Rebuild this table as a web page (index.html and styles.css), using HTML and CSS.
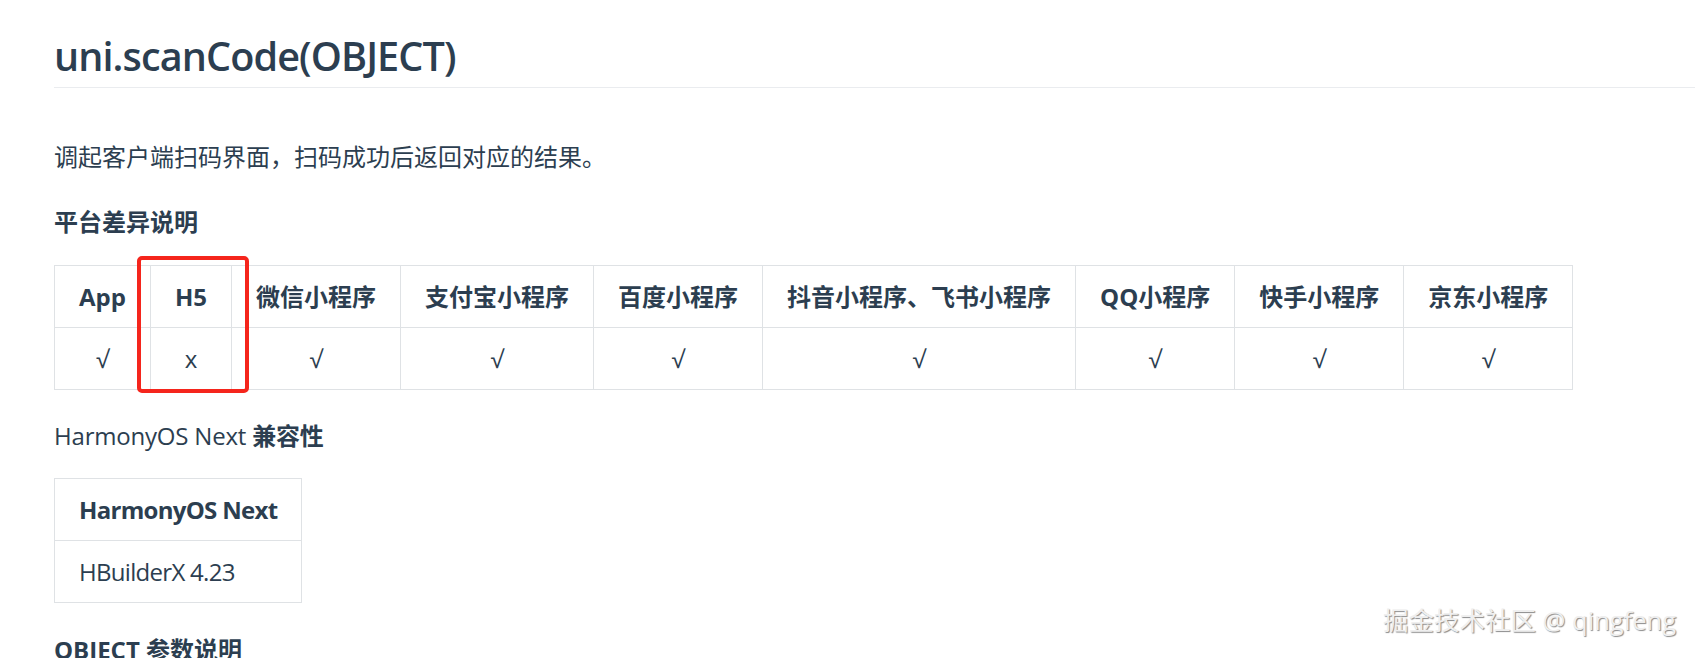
FILE: index.html
```html
<!DOCTYPE html>
<html lang="zh-CN">
<head>
  <meta charset="UTF-8" />
  <meta name="viewport" content="width=device-width, initial-scale=1.0" />
  <title>uni.scanCode(OBJECT)</title>
  <link rel="stylesheet" href="styles.css">
</head>
<body>
  <div class="page">
    <h2 class="titulo">uni.scanCode(OBJECT)</h2>

    <p class="intro">调起客户端扫码界面，扫码成功后返回对应的结果。</p>

    <p class="subtitulo">平台差异说明</p>

    <div class="tabla-wrap">
      <table class="tabla">
        <thead>
          <tr>
            <th>App</th>
            <th>H5</th>
            <th>微信小程序</th>
            <th>支付宝小程序</th>
            <th>百度小程序</th>
            <th>抖音小程序、飞书小程序</th>
            <th>QQ小程序</th>
            <th>快手小程序</th>
            <th>京东小程序</th>
          </tr>
        </thead>
        <tbody>
          <tr>
            <td>√</td>
            <td>x</td>
            <td>√</td>
            <td>√</td>
            <td>√</td>
            <td>√</td>
            <td>√</td>
            <td>√</td>
            <td>√</td>
          </tr>
        </tbody>
      </table>
      <div class="marca"></div>
    </div>

    <p class="nota">HarmonyOS Next <strong>兼容性</strong></p>

    <table class="tabla tabla-izq">
      <thead>
        <tr><th>HarmonyOS Next</th></tr>
      </thead>
      <tbody>
        <tr><td>HBuilderX 4.23</td></tr>
      </tbody>
    </table>

    <p class="subtitulo">OBJECT 参数说明</p>
  </div>

  <div class="watermark">掘金技术社区 @ qingfeng</div>
</body>
</html>
```

FILE: styles.css
```css
body {
  margin: 0;
  background: #fff;
  color: #2c3e50;
  font-family: "Open Sans", "Noto Sans CJK SC", sans-serif;
  font-size: 24px;
  overflow: hidden;
}
.page {
  padding: 31px 0 0 54px;
}
.titulo {
  margin: 0;
  font-size: 39.6px;
  font-weight: 600;
  letter-spacing: -0.9px;
  line-height: 50px;
  padding-bottom: 6px;
  border-bottom: 1px solid #eaecef;
}
.intro {
  margin: 51px 0 0;
  line-height: 36px;
}
.subtitulo {
  margin: 29px 0 0;
  line-height: 36px;
  font-weight: bold;
}
.nota {
  margin: 28px 0 0;
  line-height: 36px;
  letter-spacing: -0.2px;
}
.tabla-wrap {
  position: relative;
  display: inline-block;
  margin-top: 25px;
  vertical-align: top;
}
.tabla {
  border-collapse: collapse;
}
.tabla th, .tabla td {
  border: 1px solid #dfe2e5;
  padding: 14px 24px;
  line-height: 33px;
  text-align: center;
}
.tabla th {
  font-weight: bold;
}
.tabla-izq {
  margin-top: 24px;
}
.tabla-izq th, .tabla-izq td {
  text-align: left;
  letter-spacing: -0.7px;
}
.marca {
  position: absolute;
  left: 83px;
  top: -9px;
  width: 104px;
  height: 129px;
  border: 4px solid #f5251c;
  border-radius: 5px;
}
.watermark {
  position: absolute;
  right: 19px;
  bottom: 21px;
  font-size: 25.5px;
  color: #efefef;
  text-shadow: 1px 1px 1px #8a8a8a;
}
```
